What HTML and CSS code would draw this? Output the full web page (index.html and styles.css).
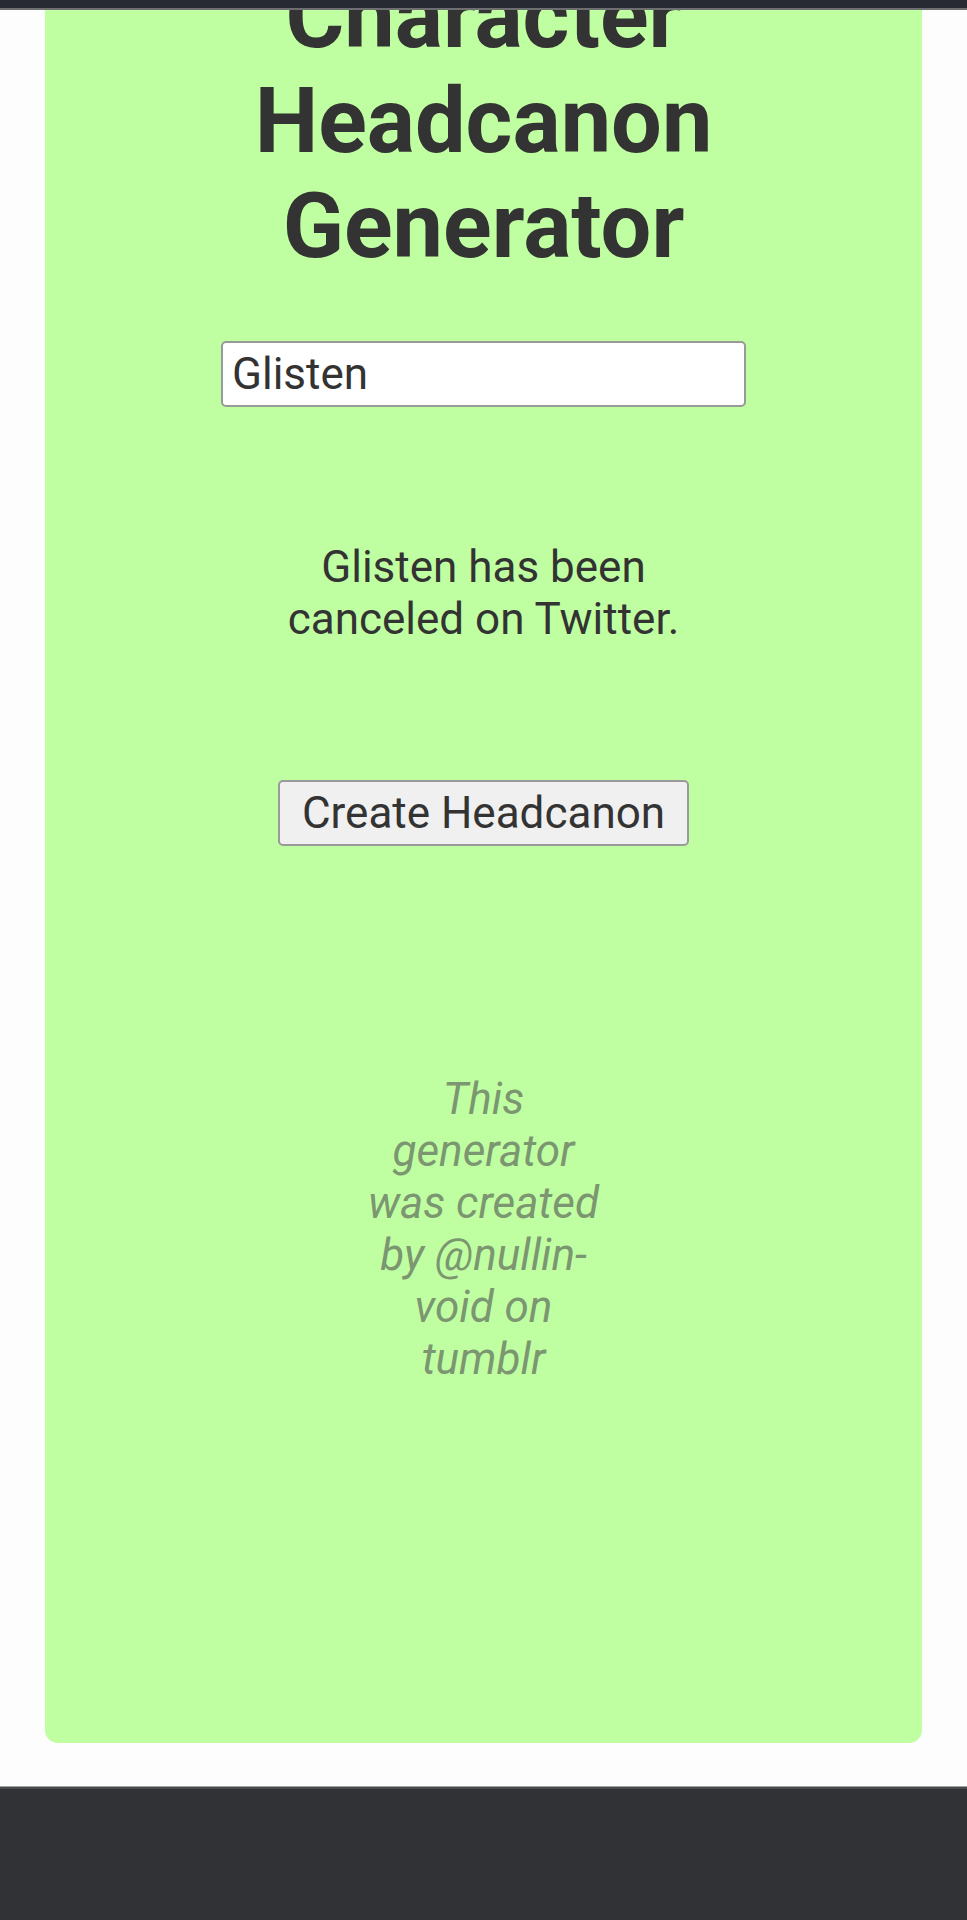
FILE: index.html
```html
<!DOCTYPE html>
<html lang="en">
<head>
<meta charset="utf-8">
<title>Character Headcanon Generator</title>
<link rel="stylesheet" href="styles.css">
</head>
<body>
<div class="topbar"></div>
<main class="card">
  <h1 class="title">Character Headcanon Generator</h1>
  <input class="name-input" type="text" value="Glisten">
  <p class="result">Glisten has been canceled on Twitter.</p>
  <button class="create-btn" type="button">Create Headcanon</button>
  <p class="credit">This generator was created by @nullin-void on tumblr</p>
</main>
<footer class="page-footer"></footer>
</body>
</html>
```

FILE: styles.css
```css
html, body {
  margin: 0;
  padding: 0;
}
body {
  background: #fdfdfd;
  font-family: Roboto, "Liberation Sans", sans-serif;
  color: #333333;
  overflow: hidden;
}
.topbar {
  position: fixed;
  top: 0;
  left: 0;
  right: 0;
  height: 8px;
  background: #272a33;
  border-bottom: 2px solid #6e6f71;
  z-index: 5;
}
.card {
  margin: -36px 45px 0 45px;
  background: #bfffa1;
  border-radius: 0 0 13px 13px;
  display: flex;
  flex-direction: column;
  align-items: center;
  padding: 0 0 358px 0;
}
.title {
  margin: 0;
  font-size: 90px;
  line-height: 105px;
  font-weight: 700;
  text-align: center;
  width: 470px;
  color: #333333;
}
.name-input {
  margin-top: 62px;
  width: 525px;
  height: 66px;
  box-sizing: border-box;
  border: 2px solid #999999;
  border-radius: 5px;
  background: #ffffff;
  padding: 0 9px;
  font-family: Roboto, "Liberation Sans", sans-serif;
  font-size: 44px;
  color: #333333;
  outline: none;
}
.result {
  margin: 135px 0 0 0;
  width: 440px;
  text-align: center;
  font-size: 44px;
  line-height: 51.6px;
  color: #333333;
}
.create-btn {
  margin-top: 135px;
  height: 66px;
  box-sizing: border-box;
  padding: 0 22px;
  border: 2px solid #9a9a9a;
  border-radius: 5px;
  background: #f0f0f0;
  font-family: Roboto, "Liberation Sans", sans-serif;
  font-size: 44px;
  color: #333333;
}
.credit {
  margin: 227px 0 0 0;
  width: 240px;
  text-align: center;
  font-size: 44px;
  line-height: 52px;
  font-style: italic;
  color: #7b9670;
}
.page-footer {
  margin-top: 43px;
  height: 200px;
  background: #313236;
  border-top: 1px solid #a2a2a2;
  box-shadow: inset 0 2px 0 #4a4b4e;
}
```
